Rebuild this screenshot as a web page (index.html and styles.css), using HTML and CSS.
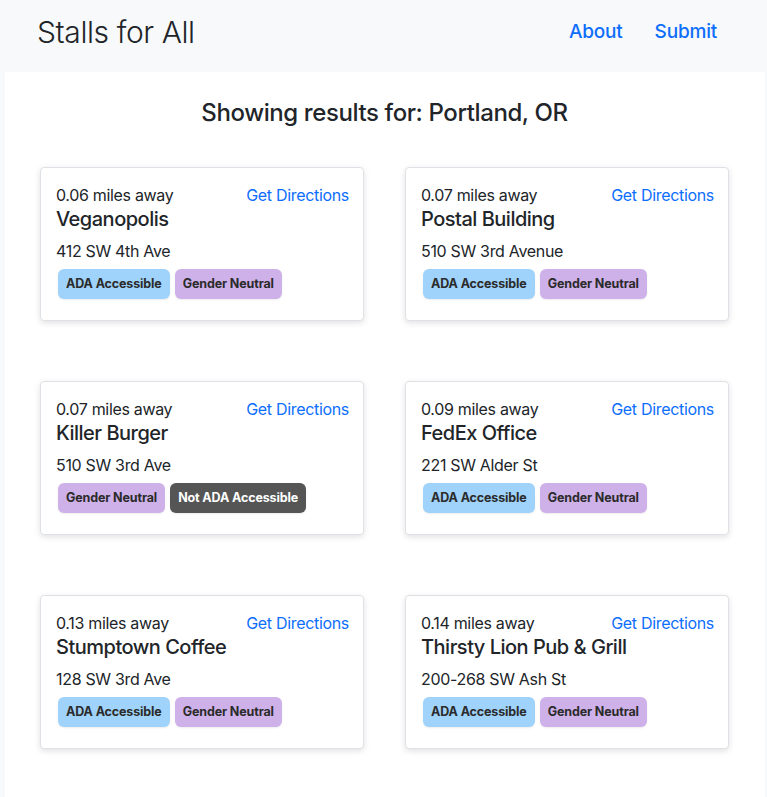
FILE: index.html
```html
<!DOCTYPE html>
<html>
<head>
<meta charset="utf-8">
<link rel="stylesheet" href="styles.css">
</head>
<body>
<header class="topbar">
  <div class="brand">Stalls for All</div>
  <nav class="nav">
    <a href="#" class="nav-link">About</a>
    <a href="#" class="nav-link">Submit</a>
  </nav>
</header>
<main class="main">
  <h1 class="results-title">Showing results for: Portland, OR</h1>
  <div class="grid">
    <div class="card">
      <div class="card-top"><span class="distance">0.06 miles away</span><a href="#" class="directions">Get Directions</a></div>
      <div class="name">Veganopolis</div>
      <div class="address">412 SW 4th Ave</div>
      <div class="badges"><span class="badge ada">ADA Accessible</span><span class="badge gender">Gender Neutral</span></div>
    </div>
    <div class="card">
      <div class="card-top"><span class="distance">0.07 miles away</span><a href="#" class="directions">Get Directions</a></div>
      <div class="name">Postal Building</div>
      <div class="address">510 SW 3rd Avenue</div>
      <div class="badges"><span class="badge ada">ADA Accessible</span><span class="badge gender">Gender Neutral</span></div>
    </div>
    <div class="card">
      <div class="card-top"><span class="distance">0.07 miles away</span><a href="#" class="directions">Get Directions</a></div>
      <div class="name">Killer Burger</div>
      <div class="address">510 SW 3rd Ave</div>
      <div class="badges"><span class="badge gender">Gender Neutral</span><span class="badge not-ada">Not ADA Accessible</span></div>
    </div>
    <div class="card">
      <div class="card-top"><span class="distance">0.09 miles away</span><a href="#" class="directions">Get Directions</a></div>
      <div class="name">FedEx Office</div>
      <div class="address">221 SW Alder St</div>
      <div class="badges"><span class="badge ada">ADA Accessible</span><span class="badge gender">Gender Neutral</span></div>
    </div>
    <div class="card">
      <div class="card-top"><span class="distance">0.13 miles away</span><a href="#" class="directions">Get Directions</a></div>
      <div class="name">Stumptown Coffee</div>
      <div class="address">128 SW 3rd Ave</div>
      <div class="badges"><span class="badge ada">ADA Accessible</span><span class="badge gender">Gender Neutral</span></div>
    </div>
    <div class="card">
      <div class="card-top"><span class="distance">0.14 miles away</span><a href="#" class="directions">Get Directions</a></div>
      <div class="name">Thirsty Lion Pub &amp; Grill</div>
      <div class="address">200-268 SW Ash St</div>
      <div class="badges"><span class="badge ada">ADA Accessible</span><span class="badge gender">Gender Neutral</span></div>
    </div>
  </div>
</main>
</body>
</html>
```
FILE: styles.css
```css
* { box-sizing: border-box; }
html, body { margin: 0; padding: 0; }
body {
  background: #f8f9fa;
  font-family: Inter, "Noto Sans", "Liberation Sans", sans-serif;
  color: #212529;
  font-size: 16px;
}
.topbar {
  height: 72px;
  display: flex;
  align-items: center;
  justify-content: space-between;
  padding: 0 50px 9px 37px;
}
.brand {
  font-size: 30px;
  font-weight: 300;
  letter-spacing: -0.4px;
  color: #212529;
}
.nav { display: flex; gap: 32px; }
.nav-link {
  color: #0d6efd;
  text-decoration: none;
  font-size: 19px;
  font-weight: 500;
  letter-spacing: -0.2px;
}
.main {
  background: #ffffff;
  margin: 0 2px 0 5px;
  padding: 26px 36px 48px 35px;
}
.results-title {
  margin: 0 0 39px;
  text-align: center;
  font-size: 24px;
  font-weight: 500;
  line-height: 30px;
  letter-spacing: -0.4px;
}
.grid {
  display: grid;
  grid-template-columns: 324px 324px;
  column-gap: 41px;
  row-gap: 60px;
}
.card {
  border: 1px solid #dee2e6;
  border-radius: 4px;
  background: #fff;
  box-shadow: 0 2px 6px rgba(0, 0, 0, 0.12);
  padding: 15px 14px 20px 15px;
  height: 154px;
  letter-spacing: -0.02em;
}
.card-top {
  display: flex;
  justify-content: space-between;
  line-height: 24px;
}
.distance { font-size: 16px; }
.directions { color: #0d6efd; text-decoration: none; font-size: 16px; }
.name {
  font-size: 20px;
  font-weight: 500;
  line-height: 24px;
  margin-bottom: 8px;
  letter-spacing: -0.025em;
}
.address { font-size: 16px; line-height: 24px; }
.badges {
  display: flex;
  gap: 5px;
  margin-top: 6px;
  padding-left: 2px;
}
.badge {
  display: inline-block;
  height: 30px;
  line-height: 30px;
  padding: 0 8px;
  border-radius: 6px;
  font-size: 12.5px;
  font-weight: 700;
  letter-spacing: -0.01em;
  color: #2b2b2b;
  box-shadow: 0 1px 2px rgba(0, 0, 0, 0.08);
}
.ada { background: #9fd3fb; }
.gender { background: #cfb1ea; }
.not-ada { background: #555555; color: #ffffff; }
```
